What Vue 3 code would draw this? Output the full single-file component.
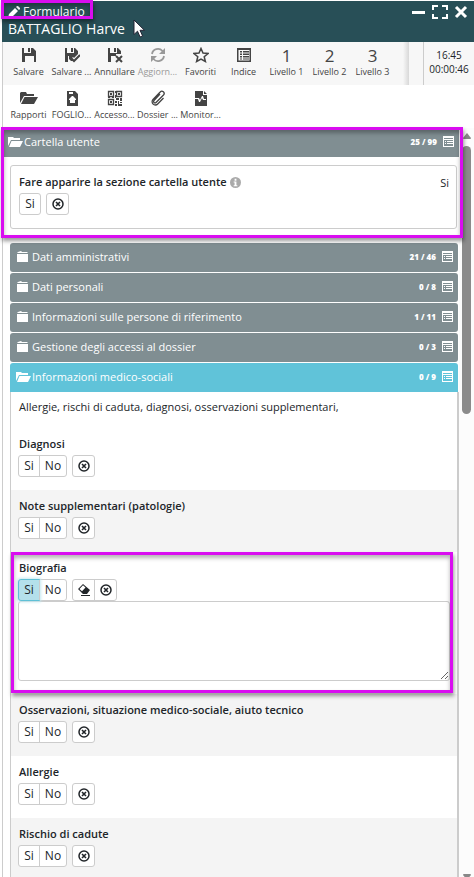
<template>
  <div class="window">
    <header class="titlebar">
      <div class="titles">
        <div class="form-name">
          <svg class="pencil" viewBox="0 0 12 12"><path d="M0 12l1-4 6-6 3 3-6 6zM8 1l1-1h1l2 2v1l-1 1z" /></svg>
          <span>Formulario</span>
        </div>
        <h1 class="patient">BATTAGLIO Harve</h1>
      </div>
      <div class="window-actions">
        <button type="button" aria-label="Riduci">
          <svg viewBox="0 0 14 14"><path d="M0 6h13v3H0z" /></svg>
        </button>
        <button type="button" aria-label="Ingrandisci" class="expand">
          <svg viewBox="0 0 16 14"><path d="M1 5V1h5M10 1h5v4M15 9v4h-5M6 13H1V9" /></svg>
        </button>
        <button type="button" aria-label="Chiudi" class="close">
          <svg viewBox="0 0 14 14"><path d="M2 2l10 10M12 2L2 12" /></svg>
        </button>
      </div>
      <div class="mark mark-title"></div>
      <svg class="cursor" viewBox="0 0 12 19"><path d="M1 1v14.500l3.500-3.300 2.600 5.800 2.500-1.100-2.600-5.600h4.500z" /></svg>
    </header>

    <nav class="toolbar">
      <div class="tools">
        <button v-for="t in mainTools" :key="t.id" type="button" class="tool" :disabled="t.disabled">
          <span v-if="t.digit" class="digit">{{ t.digit }}</span>
          <svg v-else class="tool-icon" viewBox="0 0 16 16" v-html="icons[t.icon]"></svg>
          <span class="tool-label">{{ t.label }}</span>
        </button>
      </div>
      <div class="tools-edge"></div>
      <div class="clock">
        <span>16:45</span>
        <span>00:00:46</span>
      </div>
    </nav>
    <nav class="toolbar second">
      <div class="tools">
        <button v-for="t in moreTools" :key="t.id" type="button" class="tool">
          <svg class="tool-icon" :class="{ wide: t.wide }" :viewBox="t.wide ? '0 0 19 16' : '0 0 16 16'" v-html="icons[t.icon]"></svg>
          <span class="tool-label">{{ t.label }}</span>
        </button>
      </div>
    </nav>

    <main class="main">
      <div class="content">
        <section class="root-section">
          <div class="bar root-bar">
            <svg class="folder open" viewBox="0 0 16 12" v-html="icons.open"></svg>
            <span class="bar-title">Cartella utente</span>
            <span class="count">25 / 99</span>
            <svg class="list" viewBox="0 0 11 11" v-html="icons.list"></svg>
          </div>
          <div class="card">
            <div class="card-head">
              <span class="label">Fare apparire la sezione cartella utente</span>
              <svg class="info" viewBox="0 0 12 12"><circle cx="6" cy="6" r="6" /><path d="M5 2h2v2H5zM4 5h3v4h1v1H4V9h1V6H4z" /></svg>
              <span class="card-value">Si</span>
            </div>
            <div class="controls">
              <div class="group"><button type="button">Si</button></div>
              <div class="group">
                <button type="button" class="icon-btn" aria-label="Annulla risposta"><svg viewBox="0 0 12 12" v-html="icons.clear"></svg></button>
              </div>
            </div>
          </div>
          <div class="mark mark-root"></div>
        </section>

        <div class="bars">
          <div v-for="s in sections" :key="s.title" class="bar" :class="{ active: s.open }">
            <svg class="folder" :class="{ open: s.open }" viewBox="0 0 16 12" v-html="s.open ? icons.open : icons.closed"></svg>
            <span class="bar-title">{{ s.title }}</span>
            <span class="count">{{ s.count }}</span>
            <svg class="list" viewBox="0 0 11 11" v-html="icons.list"></svg>
          </div>
        </div>

        <div class="questions">
          <p class="intro">Allergie, rischi di caduta, diagnosi, osservazioni supplementari,</p>
          <div v-for="q in questions" :key="q.id" class="question">
            <label v-if="q.text" class="label" :for="q.id">{{ q.label }}</label>
            <div v-else class="label">{{ q.label }}</div>
            <div class="controls">
              <div class="group">
                <button type="button" :class="{ on: q.answer === 'Si' }" @click="q.answer = 'Si'">Si</button>
                <button type="button" :class="{ on: q.answer === 'No' }" @click="q.answer = 'No'">No</button>
              </div>
              <div class="group">
                <button v-if="q.text" type="button" class="icon-btn" aria-label="Cancella testo"><svg viewBox="0 0 12 12" v-html="icons.eraser"></svg></button>
                <button type="button" class="icon-btn" aria-label="Annulla risposta" @click="q.answer = ''"><svg viewBox="0 0 12 12" v-html="icons.clear"></svg></button>
              </div>
            </div>
            <textarea v-if="q.text" :id="q.id"></textarea>
            <div v-if="q.text" class="mark mark-question"></div>
          </div>
        </div>
      </div>

      <div class="scrollbar">
        <svg class="arrow" viewBox="0 0 10 6"><path d="M5 0l4 5q0 1-1 1H2q-1 0-1-1z" /></svg>
        <div class="thumb"></div>
        <svg class="arrow down" viewBox="0 0 10 6"><path d="M2 0h6q1 0 1 1L5 6 1 1q0-1 1-1z" /></svg>
      </div>
    </main>
  </div>
</template>

<script setup>
import { reactive } from 'vue'

const icons = {
  save: '<path fill-rule="evenodd" d="M1 1h2v5h7V1h2l3 3v11h-2V9H4v6H1zM7 1h2v4H7z"/>',
  saveCheck: '<path d="M1 1h2v5h7V1h1l3 3v3l-4 4-1-1-1 1 1 3H7l-2-2V9H4v6H1zM7 1h2v4H7z"/><path d="M7 11l3 3 6-6" fill="none" stroke="currentColor" stroke-width="2"/>',
  saveCross: '<path d="M1 1h2v5h7V1h1l3 3v3H9v2H4v6H1zM7 1h2v4H7z"/><path d="M9 9l6 6M15 9l-6 6" fill="none" stroke="currentColor" stroke-width="2"/>',
  refresh: '<path d="M2 7a6 6 0 0 1 10.500-3L14 5.500M14 9a6 6 0 0 1-10.500 3L2 10.500" fill="none" stroke="currentColor" stroke-width="1.800"/><path d="M15 1v6H9zM1 15V9h6z"/>',
  star: '<path d="M8 1.500l2 4.600 5 .4-3.800 3.200 1.200 4.800L8 12l-4.400 2.500 1.200-4.800L1 6.500l5-.4z" fill="none" stroke="currentColor" stroke-width="1.500"/>',
  index: '<path fill-rule="evenodd" d="M1 1h14v14H1zM2.500 3v10.500h11V3z"/><path d="M4 4h2v1.500H4zM7 4h6v1.500H7zM4 6.500h2V8H4zM7 6.500h6V8H7zM4 9h2v1.500H4zM7 9h6v1.500H7zM4 11.500h2v1H4zM7 11.500h6v1H7z"/>',
  report: '<path d="M1 13V3l1-1h5l1 2h7v2H5zM5.500 7H19l-4 7H2z"/>',
  sheet: '<path fill-rule="evenodd" d="M3 1h8l3 3v12H3zM5 2v2h4V2zM8 6l-3 3v1h1v3h5v-3h1V9L9 6z"/>',
  qr: '<path d="M1.500 1.500h5v5h-5zM9.500 1.500h5v5h-5zM1.500 9.500h5v5h-5z" fill="none" stroke="currentColor" stroke-width="1.300"/><path d="M3 3h2v2H3zM11 3h2v2h-2zM3 11h2v2H3zM8 1h1v2H8zM8 5h1v3H8zM9 8h3v2H9zM13 8h2v3h-2zM8 11h2v2H8zM11 11h1v3h3v2h-4zM8 14h2v2H8zM13 12h2v1h-2zM1 7h2v1H1zM5 7h2v1H5z"/>',
  clip: '<path d="M10 4l-6 6.500a1.200 1.200 0 0 0 2 2L13.500 5a2.200 2.200 0 0 0-3.300-3L3 9.500a3.200 3.200 0 0 0 4.700 4.500L13.500 8" fill="none" stroke="currentColor" stroke-width="1.300"/>',
  monitor: '<path fill-rule="evenodd" d="M2 1h8v4h4v11H2V9h3l1 3h1l2-4 1 2h3V9h-2L10 6H9l-2 4-1-2H2zM11 1l3 3h-3z"/>',
  open: '<path d="M0 10V1h5l1 1h6v2H3zM3.500 5H15l-3 6H1z"/>',
  closed: '<path d="M1 3h11v8H1zM2 1l3-1 1 1h5l1 1H1z"/>',
  list: '<path fill-rule="evenodd" d="M0 0h11v11H0zM1 2v1h9V2zM1 4v6h9V4z"/><path d="M2 5h1v1H2zM4 5h6v1H4zM2 7h1v1H2zM4 7h6v1H4z"/>',
  clear: '<circle cx="6" cy="6" r="5" fill="none" stroke="currentColor" stroke-width="1.500"/><path d="M4 4l4 4M8 4L4 8" fill="none" stroke="currentColor" stroke-width="1.600"/>',
  eraser: '<path fill-rule="evenodd" d="M5 0l7 6-3 4H5L0 5zM5 1.300L1.500 5 4 7.300 7.500 3.500zM3 11h9v1H3z"/>'
}

const mainTools = [
  { id: 'save', icon: 'save', label: 'Salvare' },
  { id: 'saveClose', icon: 'saveCheck', label: 'Salvare ...' },
  { id: 'cancel', icon: 'saveCross', label: 'Annullare' },
  { id: 'refresh', icon: 'refresh', label: 'Aggiorn...', disabled: true },
  { id: 'fav', icon: 'star', label: 'Favoriti' },
  { id: 'index', icon: 'index', label: 'Indice' },
  { id: 'l1', digit: '1', label: 'Livello 1' },
  { id: 'l2', digit: '2', label: 'Livello 2' },
  { id: 'l3', digit: '3', label: 'Livello 3' }
]

const moreTools = [
  { id: 'reports', icon: 'report', label: 'Rapporti', wide: true },
  { id: 'sheet', icon: 'sheet', label: 'FOGLIO...' },
  { id: 'access', icon: 'qr', label: 'Accesso...' },
  { id: 'dossier', icon: 'clip', label: 'Dossier ...' },
  { id: 'monitor', icon: 'monitor', label: 'Monitor...' }
]

const sections = [
  { title: 'Dati amministrativi', count: '21 / 46' },
  { title: 'Dati personali', count: '0 / 8' },
  { title: 'Informazioni sulle persone di riferimento', count: '1 / 11' },
  { title: 'Gestione degli accessi al dossier', count: '0 / 3' },
  { title: 'Informazioni medico-sociali', count: '0 / 9', open: true }
]

const questions = reactive([
  { id: 'diagnosi', label: 'Diagnosi', answer: '' },
  { id: 'note', label: 'Note supplementari (patologie)', answer: '' },
  { id: 'biografia', label: 'Biografia', answer: 'Si', text: true },
  { id: 'osservazioni', label: 'Osservazioni, situazione medico-sociale, aiuto tecnico', answer: '' },
  { id: 'allergie', label: 'Allergie', answer: '' },
  { id: 'cadute', label: 'Rischio di cadute', answer: '' }
])
</script>

<style>
body { background: #fff; }
</style>

<style scoped>
.window { box-sizing: border-box; height: 100vh; overflow: hidden; padding-top: 1px; display: flex; flex-direction: column; font-family: "Open Sans", "Noto Sans", sans-serif; font-size: 11px; color: #212529; }
.window * { box-sizing: border-box; }
button { font-family: inherit; color: inherit; margin: 0; padding: 0; border: 0; background: none; }
svg { display: block; fill: currentColor; flex: none; }

.titlebar { position: relative; flex: none; height: 41px; margin-left: 2px; padding: 2px 6px 0; display: flex; justify-content: space-between; background: #284f57; color: #fff; }
.form-name { display: flex; align-items: center; gap: 3px; height: 17px; font-size: 12px; line-height: 17px; }
.pencil { width: 12px; height: 12px; }
.patient { margin: 0; font-size: 14px; line-height: 18px; font-weight: 400; }
.window-actions { display: flex; align-items: center; gap: 6px; height: 18px; }
.window-actions svg { width: 14px; height: 14px; }
.window-actions .expand svg { width: 16px; fill: none; stroke: currentColor; stroke-width: 2; }
.window-actions .close svg { fill: none; stroke: currentColor; stroke-width: 3; }
.cursor { position: absolute; left: 131px; top: 18px; width: 12px; height: 19px; fill: #fff; stroke: #223; stroke-width: 1; }

.toolbar { flex: none; height: 43px; margin-left: 2px; border-left: 1px solid #ccc; display: flex; background: #f7f7f7; }
.toolbar.second { background: #fff; }
.tools { flex: 1; min-width: 0; display: flex; padding-left: 4px; }
.tool { width: 43px; flex: none; display: flex; flex-direction: column; align-items: center; padding-top: 5px; color: #444; }
.tool:disabled { color: #999; }
.tool-icon { width: 16px; height: 16px; }
.tool-icon.wide { width: 19px; }
.digit { height: 16px; font-size: 17px; line-height: 18px; }
.tool-label { margin-top: 2px; font-size: 9px; line-height: 14px; white-space: nowrap; }
.tools-edge { width: 6px; flex: none; margin-right: 14px; background: linear-gradient(to right, #f7f7f7, #d8d8d8); }
.clock { width: 51px; flex: none; border-left: 1px solid #ccc; display: flex; flex-direction: column; align-items: center; padding-top: 6px; font-size: 10px; line-height: 14px; }

.main { flex: 1; min-height: 0; display: flex; margin-left: 2px; border-left: 1px solid #ccc; }
.content { flex: 1; min-width: 0; }
.root-section { position: relative; height: 115px; }
.bar { height: 29px; display: flex; align-items: center; padding: 0 5px 2px 6px; border-radius: 3px; background: #808e92; color: #fff; }
.bar.active { background: #60c3d9; border-radius: 3px 3px 0 0; }
.root-bar { border-radius: 0; padding-left: 5px; }
.bar-title { flex: 1; min-width: 0; white-space: nowrap; }
.folder { width: 16px; height: 12px; }
.count { margin-right: 6px; font-size: 8px; font-weight: 800; }
.list { width: 11px; height: 11px; }
.card { height: 64px; margin: 8px 2px 0 7px; padding: 7px 7px 0 8px; border: 1px solid #ccc; border-radius: 3px; }
.card-head { display: flex; align-items: center; height: 18px; }
.info { width: 11px; height: 11px; margin-left: 3px; fill: #aaa; }
.info path { fill: #fff; }
.card-value { margin-left: auto; }
.label { display: block; line-height: 18px; font-weight: 600; }
.controls { display: flex; gap: 5px; margin-top: 2px; }
.group { display: flex; height: 22px; border: 1px solid #ccc; border-radius: 3px; background: #fff; }
.group button { width: 20px; font-size: 12px; line-height: 20px; display: flex; align-items: center; justify-content: center; }
.group button + button { width: 27px; border-left: 1px solid #ccc; }
.group .icon-btn { width: 21px; }
.group .icon-btn + .icon-btn { width: 22px; }
.icon-btn svg { width: 12px; height: 12px; }
.group .on { background: #b4e0eb; outline: 1px solid #5fc0d6; border-radius: 2px 0 0 2px; box-shadow: 0 0 3px 2px #c5e9f1; }

.bars { display: flex; flex-direction: column; gap: 1px; margin: 0 1px 0 7px; }
.questions { margin-left: 7px; border-left: 1px solid #ccc; border-right: 2px solid #ccc; }
.intro { margin: 0; height: 36px; padding: 0 8px; line-height: 30px; }
.question { position: relative; padding: 7px 7px 13px; }
.question:nth-child(odd) { background: #f4f4f4; }
.question .label { padding-left: 1px; }
textarea { display: block; width: 100%; height: 80px; border: 1px solid #ccc; border-radius: 3px; background: #fff; font: inherit; }

.mark { position: absolute; z-index: 2; border: 3px solid #d90df0; box-shadow: 1px 3px 4px rgba(0, 0, 0, 0.4), inset 0 3px 4px rgba(0, 0, 0, 0.3); pointer-events: none; }
.mark-title { left: -1px; top: -1px; width: 92px; height: 19px; }
.mark-root { left: -2px; right: -4px; top: -1px; bottom: 5px; }
.mark-question { left: 0; right: 4px; top: 0; bottom: 1px; }

.scrollbar { width: 15px; flex: none; display: flex; flex-direction: column; align-items: center; padding-top: 5px; background: #fcfcfc; }
.arrow { width: 10px; height: 6px; color: #888; }
.thumb { width: 9px; height: 36%; margin-top: 7px; border-radius: 5px; background: #8b8b8b; }
.down { margin-top: auto; margin-bottom: -3px; }
</style>
